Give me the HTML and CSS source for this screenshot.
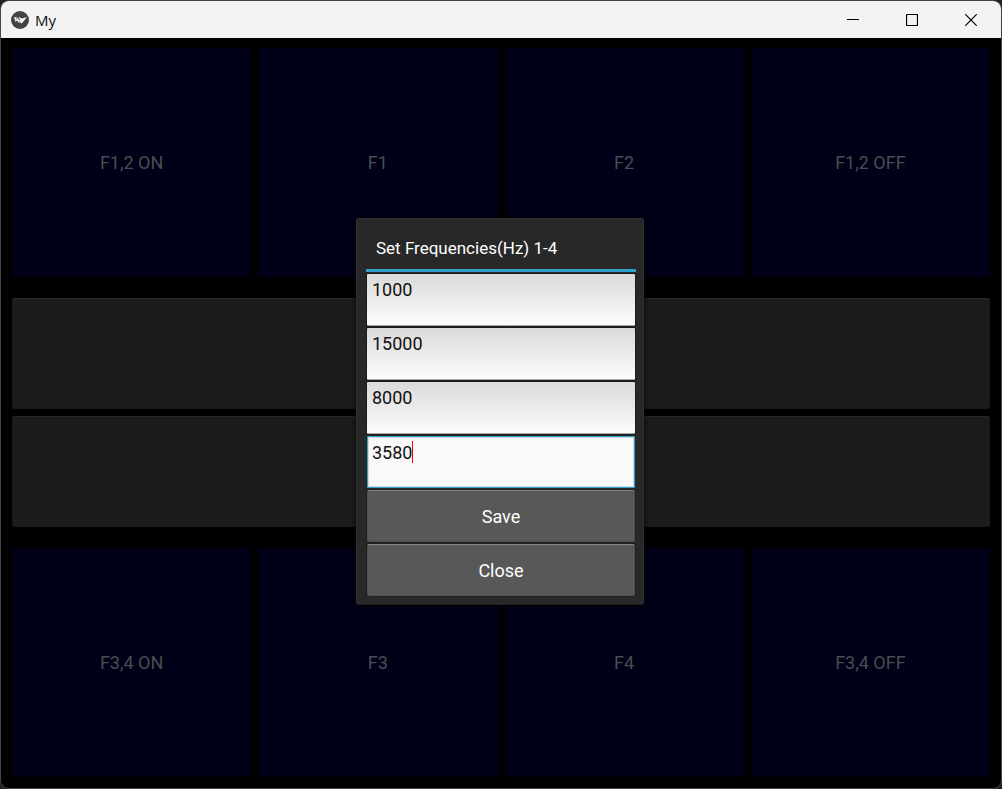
FILE: index.html
```
<!DOCTYPE html>
<html lang="en">
<head>
<meta charset="utf-8">
<title>My</title>
<link rel="stylesheet" href="styles.css">
</head>
<body>
<div class="window">
  <header class="titlebar">
    <svg class="logo" viewBox="0 0 18 18" aria-hidden="true">
      <circle cx="9" cy="9" r="9" fill="#414345"/>
      <path d="M2.8 6 5 6.2 5.8 9.2 4.6 11Z" fill="#e8e8e8"/>
      <path d="M5.4 5.8 8.8 9.4 8.4 12.2 5.8 9.6Z" fill="#f2f2f2"/>
      <path d="M7.4 5.8 11 7.6 15.8 6 13.8 8.8 10.8 12.4 9.2 11.4 9 9Z" fill="#f2f2f2"/>
    </svg>
    <h1 class="app-name">My</h1>
    <div class="controls">
      <button class="control" aria-label="Minimize"><svg class="glyph" viewBox="0 0 12 12"><path d="M0 5.5H12"/></svg></button>
      <button class="control" aria-label="Maximize"><svg class="glyph" viewBox="0 0 12 12"><rect x=".5" y=".5" width="11" height="11" rx="1"/></svg></button>
      <button class="control" aria-label="Close window"><svg class="glyph" viewBox="0 0 12 12"><path d="M.2.2 11.8 11.8M11.8.2.2 11.8"/></svg></button>
    </div>
  </header>
  <main class="content">
    <div class="board">
      <div class="tiles">
        <button class="tile">F1,2 ON</button>
        <button class="tile">F1</button>
        <button class="tile">F2</button>
        <button class="tile">F1,2 OFF</button>
      </div>
      <div class="bars">
        <button class="bar" aria-label="Upper bar"></button>
        <button class="bar" aria-label="Lower bar"></button>
      </div>
      <div class="tiles">
        <button class="tile">F3,4 ON</button>
        <button class="tile">F3</button>
        <button class="tile">F4</button>
        <button class="tile">F3,4 OFF</button>
      </div>
    </div>
    <div class="overlay">
      <form class="dialog" role="dialog" aria-labelledby="dialog-title">
        <h2 class="dialog-title" id="dialog-title">Set Frequencies(Hz) 1-4</h2>
        <div class="fields">
          <input class="field" type="text" aria-label="Frequency 1" value="1000">
          <input class="field" type="text" aria-label="Frequency 2" value="15000">
          <input class="field" type="text" aria-label="Frequency 3" value="8000">
          <div class="field-wrap">
            <input class="field field-active" type="text" aria-label="Frequency 4" value="3580">
            <span class="caret"></span>
          </div>
          <button class="action" type="button">Save</button>
          <button class="action" type="button">Close</button>
        </div>
      </form>
    </div>
  </main>
</div>
</body>
</html>
```
FILE: styles.css
```
* {
  box-sizing: border-box;
}

body {
  margin: 0;
  background: #222;
  font-family: Roboto, "Liberation Sans", sans-serif;
}

button,
input {
  margin: 0;
  font: inherit;
}

.window {
  display: flex;
  flex-direction: column;
  min-height: 100vh;
  border: 1px solid #444;
  border-radius: 9px;
  background: #000;
  overflow: hidden;
}

.titlebar {
  display: flex;
  align-items: center;
  height: 37px;
  padding-left: 10px;
  background: #f3f3f3;
  color: #111;
}

.logo {
  width: 18px;
  height: 18px;
}

.app-name {
  margin: 0 0 0 6px;
  font: 400 15px/18px "Open Sans", "Noto Sans", sans-serif;
}

.controls {
  display: flex;
  height: 100%;
  margin: 0 1px 0 auto;
}

.control {
  display: grid;
  place-items: center;
  width: 59px;
  padding: 0;
  border: 0;
  background: transparent;
}

.glyph {
  width: 12px;
  height: 12px;
  fill: none;
  stroke: #000;
  stroke-width: 1.2;
}

.content {
  position: relative;
  display: flex;
  flex: 1;
  padding: 10px 11px 11px;
}

.board {
  display: grid;
  flex: 1;
  grid-template-rows: repeat(3, 1fr);
  gap: 21px;
}

.tiles {
  display: grid;
  grid-template-columns: repeat(4, 1fr);
  gap: 7px;
}

.tile {
  padding: 0;
  border: 1px solid #000012;
  border-radius: 2px;
  background: #000018;
  color: #4c4c50;
  font-size: 18px;
}

.bars {
  display: grid;
  grid-template-rows: repeat(2, 1fr);
  gap: 7px;
}

.bar {
  border: 1px solid #181818;
  border-top-color: #292929;
  border-radius: 2px;
  background: #1c1c1c;
}

.overlay {
  position: absolute;
  inset: 0;
  display: grid;
  place-items: center;
  padding: 0 2px 3px 0;
}

.dialog {
  width: 288px;
  padding: 10px 7px 8px 9px;
  border: 1px solid #313131;
  border-bottom-color: #202020;
  border-radius: 3px;
  background: #282828;
  box-shadow: 0 0 5px #000;
}

.dialog-title {
  margin: 0;
  padding: 0 10px 2px;
  border-bottom: 3px solid #2fa0cb;
  color: #fff;
  font-size: 17px;
  font-weight: 400;
  line-height: 38px;
}

.fields {
  display: grid;
  gap: 2px;
  padding: 2px 1px 0;
}

.field {
  display: block;
  width: 100%;
  height: 52px;
  padding: 0 5px 20px;
  border: 0;
  border-bottom: 1px solid #aaa;
  border-radius: 1px;
  background: linear-gradient(#dadada, #fcfcfc);
  box-shadow: 0 0 0 1px #1c1c1c;
  color: #111;
  font-size: 18px;
  outline: 0;
  caret-color: #f00;
}

.field-wrap {
  position: relative;
}

.field-active {
  padding: 0 4px 20px;
  border: 1px solid #2fa0cb;
  background: #f9f9f9;
  box-shadow: inset 0 0 0 1px #d3dbe0;
}

.caret {
  position: absolute;
  top: 5px;
  left: 45px;
  width: 1px;
  height: 22px;
  background: #f00;
}

.action {
  height: 52px;
  padding: 0;
  border: 1px solid #505050;
  border-top-color: #858585;
  border-radius: 2px;
  background: #585858;
  box-shadow: 0 0 0 1px #202020;
  color: #fff;
  font-size: 18px;
}
```
